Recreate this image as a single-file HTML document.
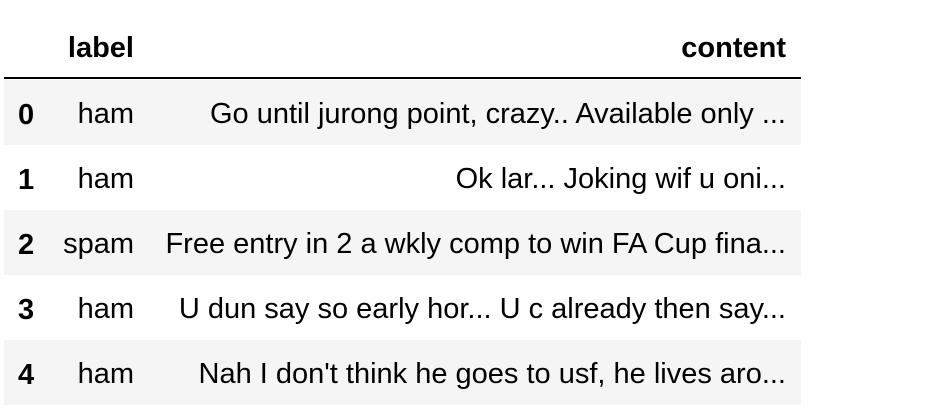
<!DOCTYPE html>
<html><head><meta charset="utf-8"><style>
body{margin:0;width:936px;height:420px;background:#fff;font-family:"Liberation Sans",Arial,sans-serif;color:#000;position:relative;overflow:hidden}
.r{position:absolute;left:4px;width:797px;height:65px}
.g{background:#f5f5f5}
.t{position:absolute;font-size:29px;line-height:30px;white-space:nowrap}
.b{font-weight:bold}
.hl{position:absolute;left:4px;top:77px;width:797px;height:2px;background:#000}
</style></head><body>
<div class="r g" style="top:80px"></div>
<div class="r g" style="top:210px"></div>
<div class="r g" style="top:340px"></div>
<div class="hl"></div>
<div class="t b" style="right:802px;top:33px">label</div>
<div class="t b" style="right:150px;top:33px">content</div>

<div class="t b" style="left:18px;top:100px">0</div>
<div class="t" style="right:802px;top:99px">ham</div>
<div class="t" style="right:150px;top:99px">Go until jurong point, crazy.. Available only ...</div>

<div class="t b" style="left:18px;top:165px">1</div>
<div class="t" style="right:802px;top:164px">ham</div>
<div class="t" style="right:150px;top:164px">Ok lar... Joking wif u oni...</div>

<div class="t b" style="left:18px;top:230px">2</div>
<div class="t" style="right:802px;top:229px">spam</div>
<div class="t" style="right:150px;top:229px">Free entry in 2 a wkly comp to win FA Cup fina...</div>

<div class="t b" style="left:18px;top:295px">3</div>
<div class="t" style="right:802px;top:294px">ham</div>
<div class="t" style="right:150px;top:294px">U dun say so early hor... U c already then say...</div>

<div class="t b" style="left:18px;top:360px">4</div>
<div class="t" style="right:802px;top:359px">ham</div>
<div class="t" style="right:150px;top:359px">Nah I don't think he goes to usf, he lives aro...</div>
</body></html>
